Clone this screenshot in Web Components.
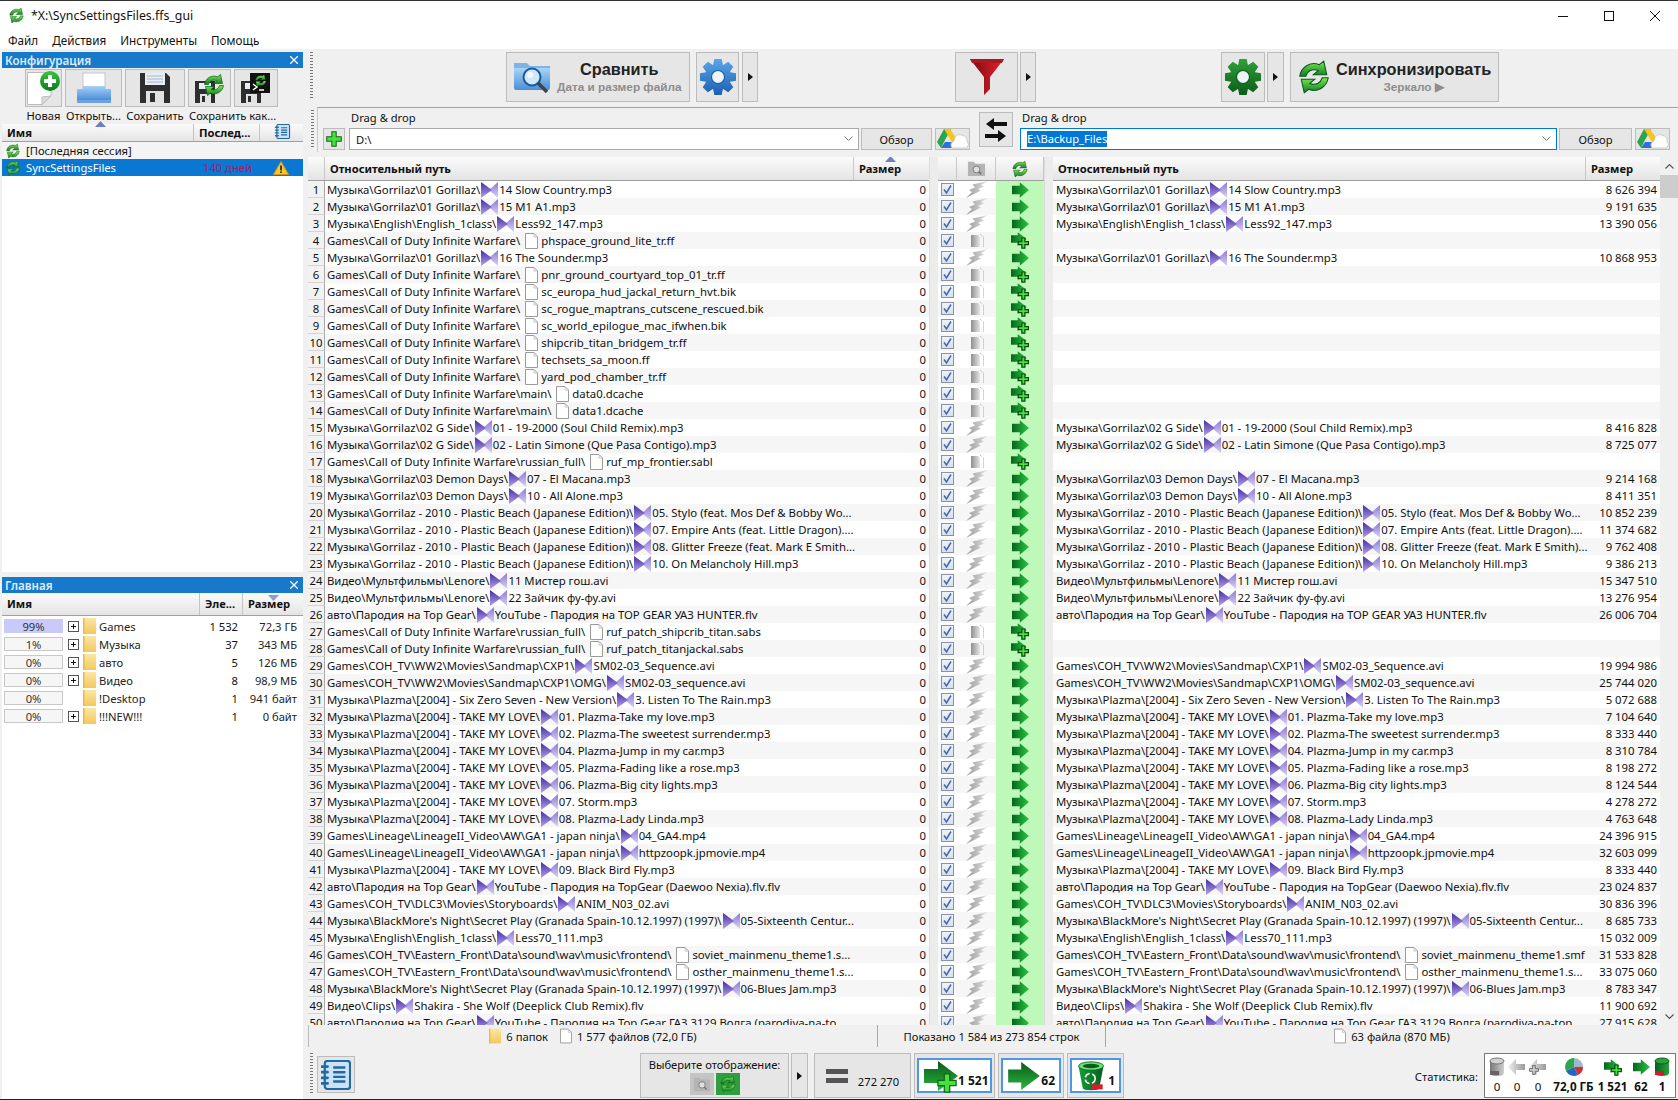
<!DOCTYPE html>
<html>
<head>
<meta charset="utf-8">
<title>FreeFileSync</title>
<style>
    html, body { margin: 0; height: 1100px; overflow: hidden; background: #f0f0f0; }
    body { font: 11.2px "Noto Sans", "Liberation Sans", sans-serif; color: #111; }
</style>
</head>
<body>
<ffs-window>
    <title-bar slot="top">*X:\SyncSettingsFiles.ffs_gui</title-bar>
    <menu-bar slot="top"></menu-bar>
    <div slot="left">
        <config-panel></config-panel>
        <overview-panel></overview-panel>
    </div>
    <div slot="right">
        <main-toolbar></main-toolbar>
        <folder-bar></folder-bar>
        <file-view></file-view>
        <status-line></status-line>
        <bottom-bar></bottom-bar>
    </div>
</ffs-window>
<script>
// icons ---------------------------------------------------------------
let gid = 0;
const svg = (w, h, vb, body) => `<svg width="${w}" height="${h}" viewBox="${vb}" style="display:block;flex:none">${body}</svg>`;
const grad = (c1, c2, h) => {
    const id = 'g' + (++gid);
    const dir = h ? 'x1="0" y1="0" x2="1" y2="0"' : 'x1="0" y1="0" x2="0" y2="1"';
    return [id, `<defs><linearGradient id="${id}" ${dir}><stop offset="0" stop-color="${c1}"/><stop offset="1" stop-color="${c2}"/></linearGradient></defs>`];
};
const syncPaths = (fill, line) => `
    <path d="M2.5 11.5C3.5 5 10 1.5 15.5 3.8L18.5 1.5L20.5 10.5L11.5 10.5L14.8 7.7C11 6.2 7.5 8 6.5 11.5Z" fill="${fill}" stroke="${line}" stroke-width=".7"/>
    <path d="M21.5 12.5C20.5 19 14 22.5 8.5 20.2L5.5 22.5L3.5 13.5L12.5 13.5L9.2 16.3C13 17.8 16.5 16 17.5 12.5Z" fill="${fill}" stroke="${line}" stroke-width=".7"/>`;
const plusPath = 'M8 1H14V8H21V14H14V21H8V14H1V8H8Z';
const I = {
    sync(s) {
        const [id, d] = grad('#7be84f', '#0c7c24');
        return svg(s, s, '0 0 24 24', d + syncPaths(`url(#${id})`, '#0b5a1a'));
    },
    plus(s) {
        return svg(s, s, '0 0 22 22', `<path d="${plusPath}" fill="#46e23c" stroke="#14641c" stroke-width="1.4"/>`);
    },
    arrow(w, h) {
        const [id, d] = grad('#07641c', '#28c642', true);
        return svg(w, h, '0 0 24 22', d + `<path d="M0 5H11V0L24 11L11 22V17H0Z" fill="url(#${id})"/>`);
    },
    arrowPlus(w, h) {
        const [id, d] = grad('#07641c', '#28c642', true);
        return svg(w, h, '0 0 24 22', d + `<path d="M0 4H9V0L21 9L9 18V14H0Z" fill="url(#${id})"/>
            <path transform="translate(9 7) scale(.68)" d="${plusPath}" fill="#46e23c" stroke="#0c4a14" stroke-width="2.4"/>`);
    },
    bigArrow(w, h) {
        const [id, d] = grad('#0a5a1c', '#2bb83f');
        return svg(w, h, '0 0 34 30', d + `<path d="M0 8H14V0L34 15L14 30V22H0Z" fill="url(#${id})"/>`);
    },
    bolt() {
        const [id, d] = grad('#9a9a9a', '#e2e2e2', true);
        return svg(22, 17, '0 0 22 17', d + `<path d="M22 0L6.5 3.5L9 6.5L3 9L6 11L0 17L15 9.5L12 8L18 5.5L15 4Z" fill="url(#${id})"/>`);
    },
    grayDoc() {
        const [id, d] = grad('#8f8f8f', '#e6e6e6', true);
        return svg(14, 15, '0 0 14 15', d + `<path d="M1 2H8L10 4V14H1Z" fill="url(#${id})"/><path d="M10 1L13.5 4V14" fill="none" stroke="#aaa" stroke-dasharray="1 1"/>`);
    },
    music() {
        const [a, d1] = grad('#452ca4', '#b4a2ea');
        const [b, d2] = grad('#8a78d8', '#d9d2f4');
        return svg(17, 16, '0 0 17 16', d1 + d2 + `<path d="M17 0V16L8 8Z" fill="url(#${b})"/><path d="M0 0L11 8L0 16Z" fill="url(#${a})"/>`);
    },
    doc(w = 13, h = 16) {
        return svg(w, h, '0 0 13 16', `<path d="M.5 .5H9L12.5 4V15.5H.5Z" fill="#fff" stroke="#9a9a9a"/><path d="M9 .5V4H12.5" fill="none" stroke="#c4c4c4"/>`);
    },
    folder(w = 13, h = 16) {
        const [id, d] = grad('#fbe6a4', '#f3c95c');
        return svg(w, h, '0 0 13 16', d + `<rect x="0" y="0" width="13" height="16" fill="url(#${id})"/><rect x="0" y="0" width="1.5" height="16" fill="#e8b94c"/>`);
    },
    newDoc() {
        const [id, d] = grad('#38c83a', '#0a7a20');
        return svg(36, 36, '0 0 36 36', d + `<path d="M1.5 2.5H25V26L16 34.5H1.5Z" fill="#fff" stroke="#bbb"/><path d="M25 26L16 27V34.5Z" fill="#dcdcdc" stroke="#bbb"/>
            <circle cx="24" cy="11" r="10" fill="url(#${id})"/><path d="M22 5H26V9H30V13H26V17H22V13H18V9H22Z" fill="#fff"/>`);
    },
    open() {
        const [id, d] = grad('#a8d0f7', '#3d84d8');
        return svg(34, 32, '0 0 34 32', d + `<rect x="6" y="1" width="22" height="17" fill="#fff" stroke="#c4c4d0"/><path d="M0 17H6V14H28V17H34V30H0Z" fill="url(#${id})"/><rect x="0" y="28" width="34" height="3" fill="#6ea3df"/>`);
    },
    floppy(s = 30) {
        return svg(s, s, '0 0 30 30', `<path d="M0 0H26L30 4V30H0Z" fill="#2e2e2e"/><rect x="5" y="0" width="20" height="12" fill="#e6edf4"/><path d="M7 3H23M7 6H23M7 9H23" stroke="#a8b8c8"/>
            <rect x="6" y="18" width="18" height="12" fill="#e2e2e2"/><rect x="10" y="20" width="5" height="9" fill="#2e2e2e"/>`);
    },
    floppySync() {
        const [id, d] = grad('#7be84f', '#0c7c24');
        return svg(30, 30, '0 0 30 30', d + `<path d="M0 8H20V30H0Z" fill="#2e2e2e"/><rect x="4" y="10" width="12" height="6" fill="#e6edf4"/><rect x="5" y="21" width="11" height="9" fill="#e2e2e2"/><rect x="7" y="23" width="3" height="6" fill="#2e2e2e"/>
            <g transform="translate(7 0)">${syncPaths(`url(#${id})`, '#0b5a1a')}</g>`);
    },
    floppyBatch() {
        const [id, d] = grad('#7be84f', '#0c7c24');
        return svg(30, 30, '0 0 30 30', d + `<path d="M0 8H20V30H0Z" fill="#2e2e2e"/><rect x="4" y="10" width="12" height="6" fill="#e6edf4"/><rect x="5" y="21" width="11" height="9" fill="#e2e2e2"/><rect x="7" y="23" width="3" height="6" fill="#2e2e2e"/>
            <rect x="9" y="0" width="20" height="20" fill="#111"/><g transform="translate(13 1) scale(.55)">${syncPaths(`url(#${id})`, 'none')}</g>
            <path d="M12 11L16 14L12 17M18 17H23" fill="none" stroke="#fff" stroke-width="1.4"/>`);
    },
    compare() {
        const [id, d] = grad('#a9d4f7', '#4a8fd6');
        return svg(38, 34, '0 0 38 34', d + `<path d="M0 3H13L16 6H36V28H0Z" fill="#7fb3e6"/><path d="M0 8H36V28Q36 30 34 30H2Q0 30 0 28Z" fill="url(#${id})"/>
            <circle cx="18" cy="17" r="8.5" fill="#cfe8fb" stroke="#1c5a9a" stroke-width="2"/><circle cx="16" cy="15" r="3" fill="#fff" opacity=".7"/><path d="M24 23L33 32" stroke="#444" stroke-width="3.5"/>`);
    },
    gear(s, c1, c2) {
        const [id, d] = grad(c1, c2);
        let p = '';
        for (let i = 0; i < 8; i++) {
            const a = i * Math.PI / 4;
            const pt = (r, o) => `${(16 + r * Math.cos(a + o)).toFixed(2)} ${(16 + r * Math.sin(a + o)).toFixed(2)}`;
            p += (i ? 'L' : 'M') + pt(11, -.38) + 'L' + pt(15.5, -.2) + 'L' + pt(15.5, .2) + 'L' + pt(11, .38);
        }
        return svg(s, s, '0 0 32 32', d + `<path d="${p}Z" fill="url(#${id})"/><circle cx="16" cy="16" r="5.5" fill="#eef4f8" stroke="${c2}" stroke-width="1"/>`);
    },
    funnel() {
        const [id, d] = grad('#7a0a10', '#e8222c', true);
        return svg(34, 40, '0 0 34 40', d + `<path d="M0 2H34L20 20V32L14 38V20Z" fill="url(#${id})"/><path d="M0 2H34L32 6H2Z" fill="#a81a20"/>`);
    },
    swap() {
        return svg(22, 26, '0 0 22 26', `<path d="M9 1V5H22V9H9V13L1 7Z" fill="#111"/><path d="M13 13V17H0V21H13V25L21 19Z" fill="#111"/>`);
    },
    cloud() {
        return svg(32, 22, '0 0 32 22', `<path d="M7 1H14L8 12L4 20L0 14Z" fill="#2da44e"/><path d="M7 1H13L22 14H15Z" fill="#f5c518"/><path d="M4 20L8 14H21L18 20Z" fill="#2f6fd8"/>
            <path d="M15 20Q12 15 17 13Q18 5 25 7Q31 9 30 13Q33 16 30 20Z" fill="#fdfdfd" stroke="#c4c4c4" stroke-width=".8"/>`);
    },
    notebook(w, h) {
        return svg(w, h, '0 0 32 32', `<rect x="4" y="1" width="27" height="30" rx="3" fill="#cde3f5" stroke="#1f6aa5" stroke-width="2.4"/>
            <path d="M13 8H26M13 13H26M13 18H26M13 23H26" stroke="#1f6aa5" stroke-width="2.6"/>
            <path d="M1 7H7M1 13H7M1 19H7M1 25H7" stroke="#1f6aa5" stroke-width="3" stroke-linecap="round"/>`);
    },
    grayFolder(s) {
        return svg(s, s, '0 0 20 20', `<path d="M1 3H7L9 5H19V18H1Z" fill="#b4b4b4"/><circle cx="10" cy="11" r="3.6" fill="#dedede" stroke="#777"/><path d="M12.5 13.5L15 16" stroke="#666" stroke-width="1.4"/>`);
    },
    warn() {
        return svg(16, 14, '0 0 16 14', `<path d="M8 .5L15.5 13.5H.5Z" fill="#f7c62f" stroke="#c9971a"/><path d="M8 4.5V9.5M8 10.5V12" stroke="#222" stroke-width="1.6"/>`);
    },
    trash(w, h) {
        const [id, d] = grad('#12a13a', '#0b5a20', true);
        return svg(w, h, '0 0 32 36', d + `<path d="M1 6L6 32Q6 35 16 35Q26 35 26 32L31 6Z" fill="url(#${id})"/><ellipse cx="16" cy="6" rx="15" ry="5" fill="#6fe07a" stroke="#0a6a20"/><ellipse cx="16" cy="6" rx="10" ry="2.6" fill="#0a5a20"/>
            <circle cx="15" cy="21" r="6" fill="none" stroke="#e6f6e6" stroke-width="2" stroke-dasharray="7 3"/><rect x="17" y="28" width="13" height="6" fill="#d3202a"/>`);
    },
    cyl(c1, c2, dash) {
        const [id, d] = grad(c1, c2, true);
        return svg(16, 20, '0 0 16 20', d + `<path d="M1 4V16Q1 19 8 19Q15 19 15 16V4Z" fill="url(#${id})"/><ellipse cx="8" cy="4" rx="7" ry="3" fill="${c2}" stroke="${c1}"/><rect x="1" y="14" width="9" height="4" fill="${dash}"/>`);
    },
    pie() {
        return svg(18, 18, '0 0 18 18', `<path d="M9 9V0A9 9 0 0 0 1 13Z" fill="#2aa84a"/><path d="M9 9V0A9 9 0 0 1 18 9Z" fill="#9fb8c8"/><path d="M9 9H18A9 9 0 0 1 13 17Z" fill="#d23030"/><path d="M9 9L13 17A9 9 0 0 1 1 13Z" fill="#2a62c0"/>`);
    },
    grayLeft(plus) {
        const [id, d] = grad('#eeeeee', '#9a9a9a', true);
        return svg(18, 16, '0 0 18 16', d + `<path d="M17 5H8V0L0 8L8 16V11H17Z" fill="url(#${id})"/>` + (plus ? `<path transform="translate(0 6) scale(.45)" d="${plusPath}" fill="#ccc" stroke="#666" stroke-width="2"/>` : ''));
    },
    chevron() {
        return svg(9, 6, '0 0 9 6', `<path d="M.5 .5L4.5 4.5L8.5 .5" fill="none" stroke="#777"/>`);
    },
    check() {
        const [id, d] = grad('#f0f4fa', '#d4dfee');
        return svg(13, 13, '0 0 13 13', d + `<rect x=".5" y=".5" width="12" height="12" fill="url(#${id})" stroke="#8c929c"/><path d="M3 6.5L5.5 10L10 2.5" fill="none" stroke="#4668a6" stroke-width="1.5"/>`);
    },
    caretUp(c = '#6f7fc4') { return svg(11, 6, '0 0 11 6', `<path d="M5.5 0L11 6H0Z" fill="${c}"/>`); },
    caretDown(c = '#8f9bd8') { return svg(11, 6, '0 0 11 6', `<path d="M0 0H11L5.5 6Z" fill="${c}"/>`); },
    plusBox() { return svg(11, 11, '0 0 11 11', `<rect x=".5" y=".5" width="10" height="10" fill="#fff" stroke="#555"/><path d="M3 5.5H8M5.5 3V8" stroke="#111"/>`); }
};

// data ----------------------------------------------------------------
const COD = 'Games\\Call of Duty Infinite Warfare\\';
const MAIN = COD + 'main\\';
const RUF = COD + 'russian_full\\';
const G1 = 'Музыка\\Gorrilaz\\01 Gorillaz\\';
const G2 = 'Музыка\\Gorrilaz\\02 G Side\\';
const G3 = 'Музыка\\Gorrilaz\\03 Demon Days\\';
const PB = 'Музыка\\Gorrilaz - 2010 - Plastic Beach (Japanese Edition)\\';
const ENG = 'Музыка\\English\\English_1class\\';
const LEN = 'Видео\\Мультфильмы\\Lenore\\';
const AVT = 'авто\\Пародия на Top Gear\\';
const CXP = 'Games\\COH_TV\\WW2\\Movies\\Sandmap\\CXP1\\';
const TML = 'Музыка\\Plazma\\[2004] - TAKE MY LOVE\\';
const GA = 'Games\\Lineage\\LineageII_Video\\AW\\GA1 - japan ninja\\';
const BM = "Музыка\\BlackMore's Night\\Secret Play (Granada Spain-10.12.1997) (1997)\\";
const EF = 'Games\\COH_TV\\Eastern_Front\\Data\\sound\\wav\\music\\frontend\\';

// path, file name, right size (empty = file only exists on the left), right name if it differs, doc icon
const ROWS = [
    [G1, '14 Slow Country.mp3', '8 626 394'],
    [G1, '15 M1 A1.mp3', '9 191 635'],
    [ENG, 'Less92_147.mp3', '13 390 056'],
    [COD, 'phspace_ground_lite_tr.ff'],
    [G1, '16 The Sounder.mp3', '10 868 953'],
    [COD, 'pnr_ground_courtyard_top_01_tr.ff'],
    [COD, 'sc_europa_hud_jackal_return_hvt.bik'],
    [COD, 'sc_rogue_maptrans_cutscene_rescued.bik'],
    [COD, 'sc_world_epilogue_mac_ifwhen.bik'],
    [COD, 'shipcrib_titan_bridgem_tr.ff'],
    [COD, 'techsets_sa_moon.ff'],
    [COD, 'yard_pod_chamber_tr.ff'],
    [MAIN, 'data0.dcache'],
    [MAIN, 'data1.dcache'],
    [G2, '01 - 19-2000 (Soul Child Remix).mp3', '8 416 828'],
    [G2, '02 - Latin Simone (Que Pasa Contigo).mp3', '8 725 077'],
    [RUF, 'ruf_mp_frontier.sabl'],
    [G3, '07 - El Macana.mp3', '9 214 168'],
    [G3, '10 - All Alone.mp3', '8 411 351'],
    [PB, '05. Stylo (feat. Mos Def & Bobby Wo...', '10 852 239'],
    [PB, '07. Empire Ants (feat. Little Dragon)....', '11 374 682'],
    [PB, '08. Glitter Freeze (feat. Mark E Smith...', '9 762 408', '08. Glitter Freeze (feat. Mark E Smith)...'],
    [PB, '10. On Melancholy Hill.mp3', '9 386 213'],
    [LEN, '11 Мистер гош.avi', '15 347 510'],
    [LEN, '22 Зайчик фу-фу.avi', '13 276 954'],
    [AVT, 'YouTube - Пародия на TOP GEAR УАЗ HUNTER.flv', '26 006 704'],
    [RUF, 'ruf_patch_shipcrib_titan.sabs'],
    [RUF, 'ruf_patch_titanjackal.sabs'],
    [CXP, 'SM02-03_Sequence.avi', '19 994 986'],
    [CXP + 'OMG\\', 'SM02-03_sequence.avi', '25 744 020'],
    ['Музыка\\Plazma\\[2004] - Six Zero Seven - New Version\\', '3. Listen To The Rain.mp3', '5 072 688'],
    [TML, '01. Plazma-Take my love.mp3', '7 104 640'],
    [TML, '02. Plazma-The sweetest surrender.mp3', '8 333 440'],
    [TML, '04. Plazma-Jump in my car.mp3', '8 310 784'],
    [TML, '05. Plazma-Fading like a rose.mp3', '8 198 272'],
    [TML, '06. Plazma-Big city lights.mp3', '8 124 544'],
    [TML, '07. Storm.mp3', '4 278 272'],
    [TML, '08. Plazma-Lady Linda.mp3', '4 763 648'],
    [GA, '04_GA4.mp4', '24 396 915'],
    [GA, 'httpzoopk.jpmovie.mp4', '32 603 099'],
    [TML, '09. Black Bird Fly.mp3', '8 333 440'],
    [AVT, 'YouTube - Пародия на TopGear (Daewoo Nexia).flv.flv', '23 024 837'],
    ['Games\\COH_TV\\DLC3\\Movies\\Storyboards\\', 'ANIM_N03_02.avi', '30 836 396'],
    [BM, '05-Sixteenth Centur...', '8 685 733'],
    [ENG, 'Less70_111.mp3', '15 032 009'],
    [EF, 'soviet_mainmenu_theme1.s...', '31 533 828', 'soviet_mainmenu_theme1.smf', true],
    [EF, 'osther_mainmenu_theme1.s...', '33 075 060', 'osther_mainmenu_theme1.s...', true],
    [BM, '06-Blues Jam.mp3', '8 783 347'],
    ['Видео\\Clips\\', 'Shakira - She Wolf (Deeplick Club Remix).flv', '11 900 692'],
    [AVT, 'YouTube - Пародия на Top Gear ГАЗ 3129 Волга (parodiya-na-to...', '27 915 628', 'YouTube - Пародия на Top Gear ГАЗ 3129 Волга (parodiya-na-top...']
];
const esc = s => s.replace(/&/g, '&amp;').replace(/</g, '&lt;');
const isDoc = r => !r[2] || r[4];

const grip = h => `<div style="width:3px;height:${h}px;flex:none;background:repeating-linear-gradient(#777 0 1px,transparent 1px 3px)"></div>`;
const btnCss = `background:#e6e6e6;border:1px solid #bcbcbc;box-sizing:border-box;display:flex;align-items:center;justify-content:center;flex:none;`;
const headBg = `background:linear-gradient(#fbfbfb,#e4e4e4);border-bottom:1px solid #a0a0a0;box-sizing:border-box;`;
const caret = `<span style="width:0;height:0;border-left:5px solid #111;border-top:4px solid transparent;border-bottom:4px solid transparent"></span>`;

// elements ------------------------------------------------------------
class FfsWindow extends HTMLElement {
    constructor() {
        super();
        this.attachShadow({ mode: 'open' }).innerHTML = `
            <style>
                :host { display: flex; flex-direction: column; width: 1678px; height: 1100px; overflow: hidden; border-top: 1px solid #333; border-bottom: 1px solid #222; box-sizing: border-box; }
                .top { background: #fff; height: 48px; flex: none; }
                .main { display: flex; flex: 1; min-height: 0; background: #f0f0f0; }
                .left { width: 305px; flex: none; }
                .right { flex: 1; min-width: 0; }
            </style>
            <div class="top"><slot name="top"></slot></div>
            <div class="main">
                <div class="left"><slot name="left"></slot></div>
                <div class="right"><slot name="right"></slot></div>
            </div>`;
    }
}
class TitleBar extends HTMLElement {
    constructor() {
        super();
        this.attachShadow({ mode: 'open' }).innerHTML = `
            <style>
                :host { display: flex; align-items: center; height: 29px; padding-left: 8px; box-sizing: border-box; font-size: 12.3px; }
                .text { margin-left: 6px; flex: 1; }
                .ctl { display: flex; }
                .ctl div { width: 46px; display: flex; justify-content: center; }
            </style>
            ${I.sync(17)}
            <div class="text"><slot></slot></div>
            <div class="ctl">
                <div>${svg(10, 10, '0 0 10 10', '<path d="M0 5.5H10" stroke="#111"/>')}</div>
                <div>${svg(10, 10, '0 0 10 10', '<rect x=".5" y=".5" width="9" height="9" fill="none" stroke="#111"/>')}</div>
                <div>${svg(10, 10, '0 0 10 10', '<path d="M0 0L10 10M10 0L0 10" stroke="#111"/>')}</div>
            </div>`;
    }
}
class MenuBar extends HTMLElement {
    constructor() {
        super();
        this.attachShadow({ mode: 'open' }).innerHTML = `
            <style>:host { display: flex; gap: 14px; height: 19px; padding-left: 8px; line-height: 20px; font-size: 11.7px; }</style>
            <span>Файл</span><span>Действия</span><span>Инструменты</span><span>Помощь</span>`;
    }
}
class DockCaption extends HTMLElement {
    constructor() {
        super();
        this.attachShadow({ mode: 'open' }).innerHTML = `
            <style>
                :host { display: flex; align-items: center; justify-content: space-between; height: 16px; background: #1679c9; color: #dcecfb; font-weight: 600; font-size: 11.6px; padding: 0 5px 0 3px; }
            </style>
            <span><slot></slot></span>
            ${svg(8, 8, '0 0 8 8', '<path d="M0 0L8 8M8 0L0 8" stroke="#fff" stroke-width="1.3"/>')}`;
    }
}
class ConfigPanel extends HTMLElement {
    constructor() {
        super();
        this.attachShadow({ mode: 'open' }).innerHTML = `
            <style>
                :host { display: block; margin: 3px 2px 0; height: 520px; background: #fff; }
                .tools { background: #f0f0f0; display: grid; grid-template-columns: 37px 57px 60px 43px 44px; column-gap: 3px; padding-left: 23px; height: 56px; box-sizing: border-box; padding-top: 1px; }
                .b { ${btnCss} height: 38px; }
                .l { height: 17px; line-height: 17px; text-align: center; white-space: nowrap; }
                .head { ${headBg} display: flex; height: 18px; font-weight: 700; line-height: 17px; position: relative; }
                .head > div { box-sizing: border-box; border-right: 1px solid #c4c4c4; padding-left: 5px; }
                .up { position: absolute; left: 93px; top: -3px; }
                .row { display: flex; align-items: center; height: 17px; padding-left: 3px; gap: 5px; }
                .sel { background: #0a78d2; color: #fff; }
                .days { color: #a51c66; width: 65px; }
            </style>
            <dock-caption>Конфигурация</dock-caption>
            <div class="tools">
                <div class="b">${I.newDoc()}</div><div class="b">${I.open()}</div><div class="b">${I.floppy()}</div><div class="b">${I.floppySync()}</div><div class="b">${I.floppyBatch()}</div>
                <div class="l">Новая</div><div class="l">Открыть...</div><div class="l">Сохранить</div><div class="l" style="grid-column:span 2;text-align:left;margin-left:1px">Сохранить как...</div>
            </div>
            <div class="head">
                <div style="width:192px">Имя</div><div style="width:66px;white-space:nowrap">Послед...</div>
                <div style="flex:1;border:0;padding:0 0 0 14px">${I.notebook(17, 15)}</div>
                <span class="up">${I.caretUp()}</span>
            </div>
            <div class="row" style="background:#f4f4f4">${I.sync(16)}<span>[Последняя сессия]</span></div>
            <div class="row sel">${I.sync(16)}<span style="width:172px">SyncSettingsFiles</span><span class="days">140 дней</span>${I.warn()}</div>`;
    }
}
class OverviewPanel extends HTMLElement {
    constructor() {
        super();
        const rows = [['99%', 'Games', '1 532', '72,3 ГБ', 1], ['1%', 'Музыка', '37', '343 МБ', 1], ['0%', 'авто', '5', '126 МБ', 1], ['0%', 'Видео', '8', '98,9 МБ', 1], ['0%', '!Desktop', '1', '941 байт', 0], ['0%', '!!!NEW!!!', '1', '0 байт', 1]];
        this.attachShadow({ mode: 'open' }).innerHTML = `
            <style>
                :host { display: block; margin: 5px 2px 0; height: 522px; background: #fff; }
                .head { ${headBg} display: flex; height: 23px; font-weight: 700; line-height: 22px; position: relative; margin-bottom: 1px; }
                .head > div { box-sizing: border-box; border-right: 1px solid #c4c4c4; padding-left: 5px; white-space: nowrap; }
                .dn { position: absolute; left: 266px; top: 2px; }
                .row { display: flex; align-items: center; height: 18px; }
                .bar { width: 59px; height: 14px; line-height: 13px; margin-left: 2px; box-sizing: border-box; border: 1px solid #c8c8c8; background: #f6f6f6; text-align: center; color: #333; }
                .bar.hi { background: #c9c9fa; border-color: #c9c9fa; }
                .x { width: 11px; margin-left: 5px; }
                .f { margin-left: 4px; }
                .n { margin-left: 3px; width: 100px; color: #222; }
                .c { width: 39px; text-align: right; }
                .s { width: 59px; text-align: right; color: #222; white-space: nowrap; }
            </style>
            <dock-caption>Главная</dock-caption>
            <div class="head">
                <div style="width:198px">Имя</div><div style="width:43px">Эле...</div><div style="flex:1;border:0">Размер</div>
                <span class="dn">${I.caretDown()}</span>
            </div>
            ${rows.map((r, i) => `<div class="row"><div class="bar ${i ? '' : 'hi'}">${r[0]}</div><div class="x">${r[4] ? I.plusBox() : ''}</div><div class="f">${I.folder()}</div><div class="n">${r[1]}</div><div class="c">${r[2]}</div><div class="s">${r[3]}</div></div>`).join('')}`;
    }
}
class ToolBtn extends HTMLElement {
    static get observedAttributes() { return ['w']; }
    constructor() {
        super();
        this.attachShadow({ mode: 'open' }).innerHTML = `
            <style>:host { ${btnCss} height: 50px; }</style>
            <slot></slot>`;
    }
    attributeChangedCallback(name, oldValue, newValue) {
        this.style.width = newValue + 'px';
    }
}
class MainToolbar extends HTMLElement {
    constructor() {
        super();
        this.attachShadow({ mode: 'open' }).innerHTML = `
            <style>
                :host { display: flex; align-items: flex-start; height: 58px; padding: 3px 0 0 5px; box-sizing: border-box; }
                .big { font: 700 16.3px "Liberation Sans", sans-serif; color: #222; }
                .sub { font: 700 11.8px "Liberation Sans", sans-serif; color: #8d8d8d; }
                .col { display: flex; flex-direction: column; align-items: center; gap: 1px; }
            </style>
            ${grip(46)}
            <tool-btn w="184" style="margin-left:193px;gap:5px;justify-content:flex-start;padding-left:7px">${I.compare()}<div class="col"><div class="big">Сравнить</div><div class="sub">Дата и размер файла</div></div></tool-btn>
            <tool-btn w="43" style="margin-left:6px">${I.gear(38, '#5aa6e8', '#1c5fb0')}</tool-btn>
            <tool-btn w="16" style="margin-left:3px">${caret}</tool-btn>
            <tool-btn w="63" style="margin-left:197px">${I.funnel()}</tool-btn>
            <tool-btn w="16" style="margin-left:2px">${caret}</tool-btn>
            <tool-btn w="44" style="margin-left:185px">${I.gear(38, '#2fa03a', '#0a5c18')}</tool-btn>
            <tool-btn w="17" style="margin-left:2px">${caret}</tool-btn>
            <tool-btn w="209" style="margin-left:6px;gap:4px;justify-content:flex-start;padding-left:5px">${I.sync(36)}<div class="col"><div class="big">Синхронизировать</div><div class="sub">Зеркало ▶</div></div></tool-btn>`;
    }
}
class FolderBar extends HTMLElement {
    constructor() {
        super();
        const sq = (w, inner, st = '') => `<div class="b" style="width:${w}px;${st}">${inner}</div>`;
        const input = (w, val, active) => `
            <div style="width:${w}px">
                <div class="lbl">Drag &amp; drop</div>
                <div class="inp ${active ? 'on' : ''}">${active ? `<span class="selt">${val}</span>` : `<span>${val}</span>`}<i></i>${I.chevron()}</div>
            </div>`;
        this.attachShadow({ mode: 'open' }).innerHTML = `
            <style>
                :host { display: flex; align-items: flex-end; height: 45px; margin-left: 12px; border-top: 1px solid #a0a0a0; border-left: 1px solid #c8c8c8; box-sizing: border-box; padding-bottom: 2px; position: relative; }
                .g { position: absolute; left: -7px; top: 2px; }
                .b { ${btnCss} height: 22px; flex: none; }
                .lbl { height: 20px; line-height: 19px; padding-left: 2px; }
                .inp { display: flex; align-items: center; height: 22px; background: #fff; border: 1px solid #a8a8a8; box-sizing: border-box; padding: 0 5px 0 6px; }
                .inp i { flex: 1; }
                .inp.on { border-color: #0078d7; }
                .selt { background: #0078d7; color: #fff; height: 16px; line-height: 16px; }
            </style>
            <div class="g">${grip(38)}</div>
            ${sq(22, I.plus(16), 'margin-left:5px')}
            <div style="margin-left:4px">${input(510, 'D:\\')}</div>
            ${sq(71, 'Обзор', 'margin-left:2px')}
            ${sq(35, I.cloud(), 'margin-left:3px')}
            ${sq(34, I.swap(), 'margin:4px 7px 0 9px;height:35px;align-self:flex-start')}
            ${input(537, 'E:\\Backup_Files', true)}
            ${sq(73, 'Обзор', 'margin-left:2px')}
            ${sq(35, I.cloud(), 'margin-left:3px')}`;
    }
}
class FileGrid extends HTMLElement {
    constructor() {
        super();
        const right = this.getAttribute('side') === 'right';
        const rows = ROWS.map((r, i) => {
            const alt = i % 2 ? 'alt' : '';
            const num = right ? '' : `<div class="num">${i + 1}</div>`;
            if (right && !r[2]) return `<div class="row ${alt}">${num}</div>`;
            const icon = isDoc(r) ? `<span class="ic d">${I.doc()}</span>` : `<span class="ic">${I.music()}</span>`;
            const name = right && r[3] ? r[3] : r[1];
            return `<div class="row ${alt}">${num}<div class="name"><span>${esc(r[0])}</span>${icon}<span>${esc(name)}</span></div><div class="size">${right ? r[2] : '0'}</div></div>`;
        }).join('');
        this.attachShadow({ mode: 'open' }).innerHTML = `
            <style>
                :host { display: block; height: 100%; overflow: hidden; background: #fff; flex: none; font-size: 11.35px; }
                .head { ${headBg} display: flex; height: 24px; font-size: 11.2px; font-weight: 700; line-height: 24px; position: relative; }
                .corner { width: 17px; flex: none; border-right: 1px solid #c8c8c8; box-sizing: border-box; }
                .hp { flex: 1; padding-left: 5px; }
                .hs { border-left: 1px solid #c8c8c8; padding-left: 5px; box-sizing: border-box; }
                .up { position: absolute; left: 577px; top: -1px; }
                .row { display: flex; height: 17px; line-height: 17px; white-space: nowrap; }
                .alt { background: #f6f6f6; }
                .num { width: 17px; flex: none; box-sizing: border-box; background: #f2f2f2; border-right: 1px solid #a8a8a8; border-bottom: 1px solid #d4d4d4; text-align: center; }
                .name { flex: 1; min-width: 0; overflow: hidden; display: flex; align-items: center; padding-left: 2px; }
                .ic { margin: 0 1px; }
                .ic.d { margin: 0 3px 0 5px; }
                .size { width: 68px; flex: none; text-align: right; padding-right: 3px; box-sizing: border-box; }
                :host([side="right"]) .name { padding-left: 3px; }
            </style>
            <div class="head">${right ? '' : '<div class="corner"></div>'}<div class="hp">Относительный путь</div><div class="hs" style="width:${right ? 75 : 76}px">Размер</div>${right ? '' : `<span class="up">${I.caretUp()}</span>`}</div>
            ${rows}`;
    }
}
class SyncColumn extends HTMLElement {
    constructor() {
        super();
        const rows = ROWS.map((r, i) => `
            <div class="row ${i % 2 ? 'alt' : ''}"><div class="c1">${I.check()}</div><div class="c2">${r[2] ? I.bolt() : I.grayDoc()}</div><div class="c3">${r[2] ? I.arrow(17, 16) : I.arrowPlus(18, 17)}</div></div>`).join('');
        this.attachShadow({ mode: 'open' }).innerHTML = `
            <style>
                :host { display: block; width: 106px; height: 100%; overflow: hidden; flex: none; background: #fff; }
                .head { ${headBg} display: flex; height: 24px; }
                .head div { display: flex; align-items: center; justify-content: center; box-sizing: border-box; border-right: 1px solid #c8c8c8; }
                .row { display: flex; height: 17px; }
                .alt { background: #f6f6f6; }
                .c1, .c2, .c3 { display: flex; align-items: center; justify-content: center; box-sizing: border-box; }
                .c1, .h1 { width: 19px; }
                .c2, .h2 { width: 39px; }
                .c3, .h3 { width: 48px; }
                .c3 { background: #bff9b9; }
            </style>
            <div class="head"><div class="h1"></div><div class="h2">${I.grayFolder(19)}</div><div class="h3">${I.sync(18)}</div></div>
            ${rows}`;
    }
}
class FileView extends HTMLElement {
    constructor() {
        super();
        this.attachShadow({ mode: 'open' }).innerHTML = `
            <style>
                :host { display: flex; height: 868px; margin: 5px 0 0 3px; }
                .split { width: 9px; flex: none; background: #ececec; border-left: 1px solid #dcdcdc; box-sizing: border-box; }
                .bar { width: 18px; flex: none; display: flex; flex-direction: column; align-items: center; background: #f0f0f0; }
                .thumb { width: 18px; height: 23px; background: #cdcdcd; margin-top: 1px; }
                .sp { flex: 1; }
                .a { height: 17px; display: flex; align-items: center; }
            </style>
            <file-grid side="left" style="width:621px"></file-grid>
            <div class="split"></div>
            <sync-column></sync-column>
            <div class="split"></div>
            <file-grid side="right" style="width:607px"></file-grid>
            <div class="bar">
                <div class="a">${svg(9, 6, '0 0 9 6', '<path d="M.5 5.5L4.5 1.5L8.5 5.5" fill="none" stroke="#555" stroke-width="1.2"/>')}</div>
                <div class="thumb"></div><div class="sp"></div>
                <div class="a">${svg(9, 6, '0 0 9 6', '<path d="M.5 .5L4.5 4.5L8.5 .5" fill="none" stroke="#555" stroke-width="1.2"/>')}</div>
            </div>`;
    }
}
class StatusLine extends HTMLElement {
    constructor() {
        super();
        this.attachShadow({ mode: 'open' }).innerHTML = `
            <style>
                :host { display: flex; height: 22px; margin-left: 3px; align-items: center; background: #f0f0f0; border-left: 1px solid #bdbdbd; box-sizing: border-box; }
                .s { display: flex; align-items: center; justify-content: center; height: 100%; gap: 5px; box-sizing: border-box; white-space: nowrap; }
                .sep { border-right: 1px solid #a8a8a8; }
            </style>
            <div class="s sep" style="width:569px">${I.folder(12, 16)}<span style="margin-right:7px">6 папок</span>${I.doc(12, 16)}<span>1 577 файлов (72,0 ГБ)</span></div>
            <div class="s sep" style="width:228px">Показано 1 584 из 273 854 строк</div>
            <div class="s" style="flex:1">${I.doc(12, 16)}<span>63 файла (870 МБ)</span></div>`;
    }
}
class BottomBar extends HTMLElement {
    constructor() {
        super();
        const pressed = (w, ml, icon, count) => `
            <div class="out" style="width:${w}px;margin-left:${ml}px"><div class="in">${icon}<b>${count}</b></div></div>`;
        const st = (w, icon, val, bold) => `<div class="st" style="width:${w}px"><div class="si">${icon}</div><div class="sv ${bold ? 'bo' : ''}">${val}</div></div>`;
        this.attachShadow({ mode: 'open' }).innerHTML = `
            <style>
                :host { display: flex; align-items: flex-start; height: 50px; margin-top: 3px; padding: 3px 2px 0 5px; box-sizing: border-box; }
                .b { ${btnCss} height: 45px; }
                .out { ${btnCss} height: 45px; padding: 2px; }
                .in { width: 100%; height: 35px; background: #fff; border: 2px solid #4d97e3; box-sizing: border-box; display: flex; align-items: center; padding-left: 5px; }
                .in b { margin-left: auto; padding: 9px 4px 0 0; white-space: nowrap; font-size: 12px; }
                .view { flex-direction: column; gap: 0; }
                .vi { display: flex; gap: 2px; margin-top: 1px; }
                .vi div { width: 24px; height: 22px; display: flex; align-items: center; justify-content: center; }
                .box { display: flex; width: 192px; height: 45px; background: #fff; border: 1px solid #7a7a7a; box-sizing: border-box; padding-left: 1px; margin-left: 6px; }
                .st { display: flex; flex-direction: column; align-items: center; flex: none; }
                .si { height: 24px; display: flex; align-items: center; padding-top: 2px; box-sizing: border-box; }
                .sv { line-height: 18px; white-space: nowrap; font-size: 11.6px; }
                .bo { font-weight: 700; }
            </style>
            ${grip(40)}
            <div class="b" style="width:38px;height:37px;margin:3px 0 0 4px">${I.notebook(30, 30)}</div>
            <div class="b view" style="width:149px;margin-left:285px"><span>Выберите отображение:</span>
                <div class="vi"><div style="background:#c4c4c4">${I.grayFolder(18)}</div><div style="background:#2f9e3f">${I.sync(18)}</div></div></div>
            <div class="b" style="width:17px;margin-left:2px">${caret}</div>
            <div class="b" style="width:97px;margin-left:6px;gap:10px">
                ${svg(22, 14, '0 0 22 14', '<rect width="22" height="5" fill="#555"/><rect y="9" width="22" height="5" fill="#555"/>')}
                <span style="padding-top:12px">272 270</span></div>
            ${pressed(81, 3, `<span style="position:relative;display:block;width:34px;height:30px">${I.bigArrow(34, 30)}<span style="position:absolute;left:13px;top:12px">${I.plus(20)}</span></span>`, '1 521')}
            ${pressed(66, 3, I.bigArrow(32, 28), '62')}
            ${pressed(57, 3, I.trash(28, 30), '1')}
            <span style="margin:16px 0 0 auto">Статистика:</span>
            <div class="box">
                ${st(22, I.cyl('#777', '#d0d0d0', '#666'), '0')}
                ${st(18, I.grayLeft(), '0')}
                ${st(24, I.grayLeft(true), '0')}
                ${st(47, I.pie(), '72,0 ГБ', 1)}
                ${st(31, I.arrowPlus(18, 17), '1 521', 1)}
                ${st(26, I.arrow(17, 16), '62', 1)}
                ${st(16, I.cyl('#0c5c20', '#26a53c', '#c8202a'), '1', 1)}
            </div>`;
    }
}
customElements.define('tool-btn', ToolBtn);
customElements.define('dock-caption', DockCaption);
customElements.define('file-grid', FileGrid);
customElements.define('sync-column', SyncColumn);
customElements.define('ffs-window', FfsWindow);
customElements.define('title-bar', TitleBar);
customElements.define('menu-bar', MenuBar);
customElements.define('config-panel', ConfigPanel);
customElements.define('overview-panel', OverviewPanel);
customElements.define('main-toolbar', MainToolbar);
customElements.define('folder-bar', FolderBar);
customElements.define('file-view', FileView);
customElements.define('status-line', StatusLine);
customElements.define('bottom-bar', BottomBar);
</script>
</body>
</html>
